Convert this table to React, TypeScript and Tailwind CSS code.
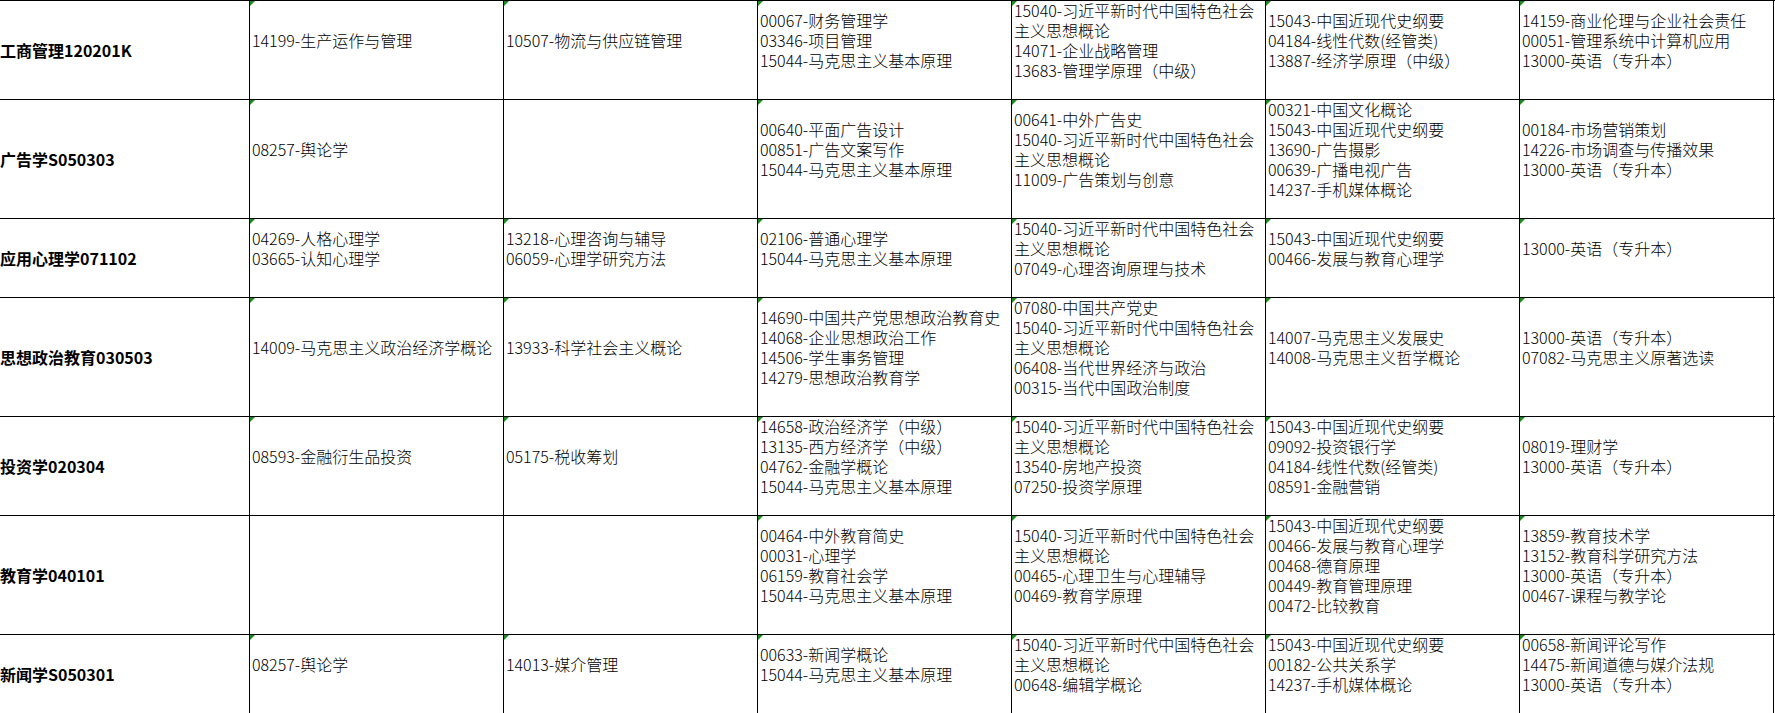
import React from "react";

type Row = {
  name: string;
  height: string;
  cells: string[][];
};

// 每行：专业名 + 六列课程（空数组 = 空单元格）
const rows: Row[] = [
  {
    name: "工商管理120201K",
    height: "h-[99px]",
    cells: [
      ["14199-生产运作与管理"],
      ["10507-物流与供应链管理"],
      ["00067-财务管理学", "03346-项目管理", "15044-马克思主义基本原理"],
      ["15040-习近平新时代中国特色社会", "主义思想概论", "14071-企业战略管理", "13683-管理学原理（中级）"],
      ["15043-中国近现代史纲要", "04184-线性代数(经管类)", "13887-经济学原理（中级）"],
      ["14159-商业伦理与企业社会责任", "00051-管理系统中计算机应用", "13000-英语（专升本）"],
    ],
  },
  {
    name: "广告学S050303",
    height: "h-[119px]",
    cells: [
      ["08257-舆论学"],
      [],
      ["00640-平面广告设计", "00851-广告文案写作", "15044-马克思主义基本原理"],
      ["00641-中外广告史", "15040-习近平新时代中国特色社会", "主义思想概论", "11009-广告策划与创意"],
      ["00321-中国文化概论", "15043-中国近现代史纲要", "13690-广告摄影", "00639-广播电视广告", "14237-手机媒体概论"],
      ["00184-市场营销策划", "14226-市场调查与传播效果", "13000-英语（专升本）"],
    ],
  },
  {
    name: "应用心理学071102",
    height: "h-[79px]",
    cells: [
      ["04269-人格心理学", "03665-认知心理学"],
      ["13218-心理咨询与辅导", "06059-心理学研究方法"],
      ["02106-普通心理学", "15044-马克思主义基本原理"],
      ["15040-习近平新时代中国特色社会", "主义思想概论", "07049-心理咨询原理与技术"],
      ["15043-中国近现代史纲要", "00466-发展与教育心理学"],
      ["13000-英语（专升本）"],
    ],
  },
  {
    name: "思想政治教育030503",
    height: "h-[119px]",
    cells: [
      ["14009-马克思主义政治经济学概论"],
      ["13933-科学社会主义概论"],
      ["14690-中国共产党思想政治教育史", "14068-企业思想政治工作", "14506-学生事务管理", "14279-思想政治教育学"],
      ["07080-中国共产党史", "15040-习近平新时代中国特色社会", "主义思想概论", "06408-当代世界经济与政治", "00315-当代中国政治制度"],
      ["14007-马克思主义发展史", "14008-马克思主义哲学概论"],
      ["13000-英语（专升本）", "07082-马克思主义原著选读"],
    ],
  },
  {
    name: "投资学020304",
    height: "h-[99px]",
    cells: [
      ["08593-金融衍生品投资"],
      ["05175-税收筹划"],
      ["14658-政治经济学（中级）", "13135-西方经济学（中级）", "04762-金融学概论", "15044-马克思主义基本原理"],
      ["15040-习近平新时代中国特色社会", "主义思想概论", "13540-房地产投资", "07250-投资学原理"],
      ["15043-中国近现代史纲要", "09092-投资银行学", "04184-线性代数(经管类)", "08591-金融营销"],
      ["08019-理财学", "13000-英语（专升本）"],
    ],
  },
  {
    name: "教育学040101",
    height: "h-[119px]",
    cells: [
      [],
      [],
      ["00464-中外教育简史", "00031-心理学", "06159-教育社会学", "15044-马克思主义基本原理"],
      ["15040-习近平新时代中国特色社会", "主义思想概论", "00465-心理卫生与心理辅导", "00469-教育学原理"],
      ["15043-中国近现代史纲要", "00466-发展与教育心理学", "00468-德育原理", "00449-教育管理原理", "00472-比较教育"],
      ["13859-教育技术学", "13152-教育科学研究方法", "13000-英语（专升本）", "00467-课程与教学论"],
    ],
  },
  {
    name: "新闻学S050301",
    height: "h-[79px]",
    cells: [
      ["08257-舆论学"],
      ["14013-媒介管理"],
      ["00633-新闻学概论", "15044-马克思主义基本原理"],
      ["15040-习近平新时代中国特色社会", "主义思想概论", "00648-编辑学概论"],
      ["15043-中国近现代史纲要", "00182-公共关系学", "14237-手机媒体概论"],
      ["00658-新闻评论写作", "14475-新闻道德与媒介法规", "13000-英语（专升本）"],
    ],
  },
];

function CourseCell({ lines }: { lines: string[] }) {
  return (
    <div className="relative flex w-[254px] shrink-0 items-center overflow-hidden border-r border-black pl-[2px] font-light">
      {lines.length > 0 && (
        <>
          {/* Excel 的“文本格式数字”绿色小三角 */}
          <span className="absolute left-0 top-0 h-0 w-0 border-r-[5px] border-t-[5px] border-r-transparent border-t-[#1a8c1a]" />
          <div className="flex flex-col">
            {lines.map((l, i) => (
              <div key={i} className="h-[20px] whitespace-nowrap">
                {l}
              </div>
            ))}
            {/* 单元格末尾的换行 */}
            <div className="h-[20px]" />
          </div>
        </>
      )}
    </div>
  );
}

export default function App() {
  return (
    <div
      className="h-[713px] w-[1775px] overflow-hidden bg-white text-[16px] leading-[20px] text-black"
      style={{ fontFamily: '"Noto Sans CJK SC", "Noto Sans", sans-serif' }}
    >
      <div className="flex flex-col border-t border-black">
        {rows.map((row) => (
          <div key={row.name} className={`flex border-b border-black ${row.height}`}>
            <div className="flex w-[250px] shrink-0 items-center border-r border-black font-bold">
              {row.name}
            </div>
            {row.cells.map((c, i) => (
              <CourseCell key={i} lines={c} />
            ))}
          </div>
        ))}
      </div>
    </div>
  );
}
